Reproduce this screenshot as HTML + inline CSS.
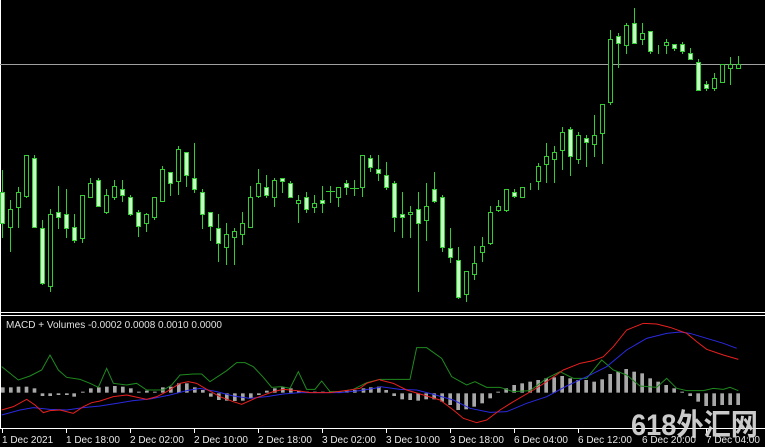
<!DOCTYPE html>
<html><head><meta charset="utf-8"><style>
html,body{margin:0;padding:0;background:#000;width:765px;height:447px;overflow:hidden}
svg{display:block}
text{font-family:"Liberation Sans","Noto Sans CJK SC",sans-serif}
</style></head><body>
<svg width="765" height="447" viewBox="0 0 765 447" xmlns="http://www.w3.org/2000/svg">
<rect width="765" height="447" fill="#000"/>
<!-- frames -->
<line x1="0.5" y1="0" x2="0.5" y2="428" stroke="#fff"/>
<line x1="0" y1="312.5" x2="765" y2="312.5" stroke="#fff"/>
<line x1="0" y1="315.5" x2="765" y2="315.5" stroke="#fff"/>
<line x1="0" y1="428.5" x2="765" y2="428.5" stroke="#fff"/>
<line x1="0" y1="64.5" x2="765" y2="64.5" stroke="#a0a0a0"/>
<!-- candles -->
<g shape-rendering="crispEdges" stroke="#33cc33" stroke-width="1">
<path fill="none" d="M2.5 170V238M10.5 200V252M18.5 187V228M26.5 155V198M34.5 155V228M42.5 220V285M50.5 209V292M58.5 186V229M66.5 189V238M74.5 214V243M82.5 195V243M90.5 178V198M98.5 178V207M106.5 189V214M114.5 180V200M122.5 180V202M130.5 195V216M138.5 210V237M146.5 213V232M154.5 197V220M162.5 166V201M170.5 172V196M178.5 146V195M186.5 152V187M194.5 143V193M202.5 189V229M210.5 212V241M218.5 214V262M226.5 223V265M234.5 228V265M242.5 212V245M250.5 186V228M258.5 169V198M266.5 175V198M274.5 178V207M282.5 178V193M290.5 181V198M298.5 195V223M306.5 192V213M314.5 195V213M322.5 186V213M330.5 186V203M338.5 187V207M346.5 180V195M354.5 180V196M362.5 155V197M370.5 155V172M378.5 155V181M386.5 162V190M394.5 181V232M402.5 192V238M410.5 206V238M418.5 192V292M426.5 183V241M434.5 172V203M442.5 195V252M450.5 228V263M458.5 247V299M466.5 271V302M474.5 246V280M482.5 237V262M490.5 206V245M498.5 200V212M506.5 189V212M514.5 189V198M522.5 187V198M530.5 183V190M538.5 163V190M546.5 143V183M554.5 146V183M562.5 127V170M570.5 127V176M578.5 132V164M586.5 135V167M594.5 115V157M602.5 104V164M610.5 30V105M618.5 33V68M626.5 23V54M634.5 8V43M642.5 23V45M650.5 31V54M658.5 45V54M666.5 39V54M674.5 44V51M682.5 42V54M690.5 48V59M698.5 59V90M706.5 81V91M714.5 73V91M722.5 64V82M730.5 57V85M738.5 56V68M326 191.5H335M350 188.5H359"/>
<g fill="#000">
<rect x="8.5" y="209.5" width="4" height="18"/><rect x="16.5" y="192.5" width="4" height="15"/><rect x="24.5" y="155.5" width="4" height="41"/><rect x="48.5" y="214.5" width="4" height="72"/><rect x="80.5" y="195.5" width="4" height="43"/><rect x="88.5" y="183.5" width="4" height="14"/><rect x="104.5" y="195.5" width="4" height="17"/><rect x="112.5" y="186.5" width="4" height="11"/><rect x="144.5" y="214.5" width="4" height="9"/><rect x="152.5" y="197.5" width="4" height="20"/><rect x="160.5" y="169.5" width="4" height="32"/><rect x="176.5" y="149.5" width="4" height="32"/><rect x="224.5" y="234.5" width="4" height="13"/><rect x="232.5" y="231.5" width="4" height="6"/><rect x="240.5" y="223.5" width="4" height="11"/><rect x="248.5" y="197.5" width="4" height="30"/><rect x="256.5" y="183.5" width="4" height="13"/><rect x="272.5" y="180.5" width="4" height="17"/><rect x="296.5" y="200.5" width="4" height="3"/><rect x="312.5" y="203.5" width="4" height="4"/><rect x="336.5" y="187.5" width="4" height="10"/><rect x="360.5" y="155.5" width="4" height="32"/><rect x="408.5" y="212.5" width="4" height="2"/><rect x="424.5" y="206.5" width="4" height="14"/><rect x="464.5" y="271.5" width="4" height="23"/><rect x="472.5" y="263.5" width="4" height="11"/><rect x="480.5" y="246.5" width="4" height="6"/><rect x="488.5" y="212.5" width="4" height="31"/><rect x="496.5" y="206.5" width="4" height="4"/><rect x="504.5" y="189.5" width="4" height="21"/><rect x="520.5" y="187.5" width="4" height="10"/><rect x="536.5" y="166.5" width="4" height="15"/><rect x="544.5" y="156.5" width="4" height="8"/><rect x="552.5" y="152.5" width="4" height="7"/><rect x="560.5" y="132.5" width="4" height="18"/><rect x="576.5" y="135.5" width="4" height="24"/><rect x="592.5" y="135.5" width="4" height="9"/><rect x="600.5" y="104.5" width="4" height="29"/><rect x="608.5" y="39.5" width="4" height="63"/><rect x="624.5" y="25.5" width="4" height="20"/><rect x="640.5" y="33.5" width="4" height="6"/><rect x="664.5" y="42.5" width="4" height="3"/><rect x="712.5" y="78.5" width="4" height="10"/><rect x="720.5" y="64.5" width="4" height="18"/><rect x="728.5" y="64.5" width="4" height="4"/><rect x="736.5" y="64.5" width="4" height="4"/>
</g>
<g fill="#c4fac4">
<rect x="0.5" y="192.5" width="4" height="31"/><rect x="32.5" y="158.5" width="4" height="69"/><rect x="40.5" y="228.5" width="4" height="55"/><rect x="56.5" y="212.5" width="4" height="5"/><rect x="64.5" y="214.5" width="4" height="14"/><rect x="72.5" y="227.5" width="4" height="13"/><rect x="96.5" y="180.5" width="4" height="26"/><rect x="120.5" y="189.5" width="4" height="6"/><rect x="128.5" y="197.5" width="4" height="17"/><rect x="136.5" y="212.5" width="4" height="14"/><rect x="168.5" y="172.5" width="4" height="11"/><rect x="184.5" y="152.5" width="4" height="23"/><rect x="192.5" y="178.5" width="4" height="11"/><rect x="200.5" y="192.5" width="4" height="22"/><rect x="208.5" y="212.5" width="4" height="14"/><rect x="216.5" y="228.5" width="4" height="15"/><rect x="264.5" y="187.5" width="4" height="8"/><rect x="280.5" y="178.5" width="4" height="3"/><rect x="288.5" y="183.5" width="4" height="14"/><rect x="304.5" y="197.5" width="4" height="12"/><rect x="320.5" y="200.5" width="4" height="3"/><rect x="344.5" y="183.5" width="4" height="4"/><rect x="368.5" y="158.5" width="4" height="9"/><rect x="376.5" y="169.5" width="4" height="4"/><rect x="384.5" y="175.5" width="4" height="12"/><rect x="392.5" y="183.5" width="4" height="34"/><rect x="400.5" y="214.5" width="4" height="3"/><rect x="416.5" y="209.5" width="4" height="14"/><rect x="432.5" y="189.5" width="4" height="12"/><rect x="440.5" y="197.5" width="4" height="50"/><rect x="448.5" y="248.5" width="4" height="9"/><rect x="456.5" y="260.5" width="4" height="37"/><rect x="512.5" y="192.5" width="4" height="4"/><rect x="568.5" y="129.5" width="4" height="27"/><rect x="584.5" y="138.5" width="4" height="4"/><rect x="616.5" y="36.5" width="4" height="7"/><rect x="632.5" y="23.5" width="4" height="20"/><rect x="648.5" y="31.5" width="4" height="20"/><rect x="672.5" y="44.5" width="4" height="4"/><rect x="680.5" y="44.5" width="4" height="7"/><rect x="688.5" y="53.5" width="4" height="6"/><rect x="696.5" y="62.5" width="4" height="28"/><rect x="704.5" y="84.5" width="4" height="4"/>
</g>
</g>
<text x="6" y="328" font-size="10" fill="#e0e0e0">MACD + Volumes -0.0002 0.0008 0.0010 0.0000</text>
<!-- indicator left half (zoom coords) -->
<g transform="translate(0,300) scale(0.33333)" fill="none" stroke-width="3">
<g fill="#a8a8a8" stroke="none">
<rect x="3" y="262" width="11" height="16"/><rect x="27" y="262" width="11" height="16"/><rect x="50" y="260" width="11" height="18"/><rect x="74" y="260" width="11" height="18"/><rect x="98" y="265" width="11" height="13"/>
<rect x="122" y="280" width="11" height="8"/><rect x="145" y="280" width="11" height="8"/><rect x="170" y="280" width="11" height="5"/><rect x="195" y="280" width="11" height="5"/><rect x="217" y="280" width="11" height="10"/>
<rect x="243" y="275" width="11" height="3"/><rect x="267" y="265" width="11" height="13"/><rect x="291" y="262" width="11" height="16"/><rect x="315" y="260" width="11" height="18"/><rect x="339" y="258" width="11" height="20"/><rect x="363" y="260" width="11" height="18"/><rect x="387" y="265" width="11" height="13"/><rect x="411" y="275" width="11" height="3"/><rect x="435" y="272" width="11" height="6"/><rect x="459" y="275" width="11" height="3"/><rect x="483" y="262" width="11" height="16"/><rect x="507" y="260" width="11" height="18"/><rect x="531" y="250" width="11" height="28"/><rect x="555" y="250" width="11" height="28"/><rect x="579" y="262" width="11" height="16"/><rect x="603" y="270" width="11" height="8"/>
<rect x="627" y="280" width="11" height="10"/><rect x="651" y="280" width="11" height="20"/><rect x="675" y="280" width="11" height="22"/><rect x="699" y="280" width="11" height="23"/><rect x="723" y="280" width="11" height="22"/><rect x="747" y="280" width="11" height="15"/><rect x="771" y="280" width="11" height="5"/>
<rect x="795" y="272" width="11" height="6"/><rect x="819" y="265" width="11" height="13"/><rect x="843" y="262" width="11" height="16"/><rect x="867" y="265" width="11" height="13"/><rect x="891" y="272" width="11" height="6"/><rect x="915" y="275" width="11" height="3"/><rect x="939" y="275" width="11" height="3"/><rect x="963" y="275" width="11" height="3"/><rect x="987" y="275" width="11" height="3"/><rect x="1011" y="274" width="11" height="4"/><rect x="1035" y="272" width="11" height="6"/><rect x="1059" y="270" width="11" height="8"/><rect x="1085" y="265" width="11" height="13"/><rect x="1107" y="262" width="11" height="16"/><rect x="1131" y="260" width="11" height="18"/>
</g>
<polyline stroke="#1f8a1f" points="5,200 55,240 90,228 125,210 150,165 175,210 200,232 240,238 270,250 295,262 320,205 340,250 380,255 410,250 440,270 490,270 515,255 540,225 580,222 605,222 630,245 680,212 710,188 735,188 760,200 790,232 815,262 845,260 870,265 895,215 920,268 945,268 965,243 990,275 1020,275 1060,268 1100,248 1140,238"/>
<polyline stroke="#2a2ae0" points="5,345 60,330 100,323 150,328 200,330 250,323 300,318 350,310 400,302 450,297 510,285 560,272 600,265 650,275 700,288 750,295 800,290 850,282 900,278 960,278 1020,278 1080,272 1140,262"/>
<polyline stroke="#e82020" points="5,330 40,320 80,298 105,315 130,338 150,332 180,330 220,340 250,320 275,308 300,303 340,290 380,285 440,298 470,290 500,275 540,250 565,245 590,250 620,268 660,290 700,305 725,313 770,293 820,275 850,268 890,272 930,278 990,278 1050,270 1080,265 1100,250 1140,238"/>
</g>
<!-- indicator right half -->
<g transform="translate(380,300) scale(0.33333)" fill="none" stroke-width="3">
<g fill="#a8a8a8" stroke="none">
<rect x="13" y="270" width="11" height="8"/><rect x="37" y="280" width="11" height="8"/><rect x="61" y="280" width="11" height="18"/><rect x="85" y="280" width="11" height="20"/><rect x="109" y="280" width="11" height="22"/><rect x="133" y="280" width="11" height="18"/><rect x="157" y="280" width="11" height="18"/><rect x="181" y="280" width="11" height="25"/><rect x="205" y="280" width="11" height="35"/><rect x="229" y="280" width="11" height="50"/><rect x="253" y="280" width="11" height="48"/><rect x="277" y="280" width="11" height="40"/><rect x="301" y="280" width="11" height="30"/><rect x="325" y="280" width="11" height="15"/>
<rect x="349" y="275" width="11" height="3"/><rect x="373" y="265" width="11" height="13"/><rect x="397" y="255" width="11" height="23"/><rect x="421" y="250" width="11" height="28"/><rect x="445" y="245" width="11" height="33"/><rect x="469" y="240" width="11" height="38"/><rect x="493" y="235" width="11" height="43"/><rect x="517" y="232" width="11" height="46"/><rect x="541" y="228" width="11" height="50"/><rect x="565" y="235" width="11" height="43"/><rect x="589" y="240" width="11" height="38"/><rect x="613" y="240" width="11" height="38"/><rect x="637" y="245" width="11" height="33"/><rect x="661" y="238" width="11" height="40"/><rect x="685" y="222" width="11" height="56"/><rect x="709" y="215" width="11" height="63"/><rect x="733" y="207" width="11" height="71"/><rect x="757" y="215" width="11" height="63"/><rect x="781" y="220" width="11" height="58"/><rect x="805" y="235" width="11" height="43"/><rect x="829" y="245" width="11" height="33"/><rect x="853" y="255" width="11" height="23"/><rect x="877" y="265" width="11" height="13"/><rect x="901" y="275" width="11" height="3"/>
<rect x="925" y="280" width="11" height="8"/><rect x="949" y="280" width="11" height="25"/><rect x="973" y="280" width="11" height="38"/><rect x="997" y="280" width="11" height="38"/><rect x="1021" y="280" width="11" height="35"/><rect x="1045" y="280" width="11" height="35"/><rect x="1069" y="280" width="11" height="35"/>
</g>
<polyline stroke="#1f8a1f" points="0,238 90,238 110,143 140,143 185,175 215,230 260,255 285,245 320,262 360,262 400,275 450,272 500,235 540,215 580,235 620,235 665,180 700,210 740,225 780,258 830,262 860,235 890,265 920,272 970,272 1000,265 1030,268 1050,262 1075,272"/>
<polyline stroke="#2a2ae0" points="0,260 60,268 110,270 160,283 220,300 270,325 330,337 380,335 440,310 500,290 560,258 620,230 680,200 740,150 800,115 860,100 900,96 930,100 980,115 1030,130 1070,145"/>
<polyline stroke="#e82020" points="0,240 40,250 80,270 130,285 180,300 220,330 250,355 290,368 320,360 360,330 400,305 460,270 500,245 550,210 600,190 640,182 670,170 700,140 740,90 790,70 830,72 870,82 920,100 950,125 980,148 1030,165 1075,178"/>
</g>
<!-- axis ticks -->
<path stroke="#fff" shape-rendering="crispEdges" d="M2.5 428V433M66.5 428V433M130.5 428V433M194.5 428V433M258.5 428V433M322.5 428V433M386.5 428V433M450.5 428V433M514.5 428V433M578.5 428V433M642.5 428V433M706.5 428V433"/>
<g font-size="10" fill="#e8e8e8">
<text x="2" y="443">1 Dec 2021</text><text x="66" y="443">1 Dec 18:00</text><text x="130" y="443">2 Dec 02:00</text><text x="194" y="443">2 Dec 10:00</text><text x="258" y="443">2 Dec 18:00</text><text x="322" y="443">3 Dec 02:00</text><text x="386" y="443">3 Dec 10:00</text><text x="450" y="443">3 Dec 18:00</text><text x="514" y="443">6 Dec 04:00</text><text x="578" y="443">6 Dec 12:00</text><text x="642" y="443">6 Dec 20:00</text><text x="706" y="443">7 Dec 04:00</text>
</g>
<text x="631" y="435" font-size="30" font-weight="bold" fill="#dcdcdc" fill-opacity="0.92" textLength="127" lengthAdjust="spacingAndGlyphs">618外汇网</text>
</svg>
</body></html>
